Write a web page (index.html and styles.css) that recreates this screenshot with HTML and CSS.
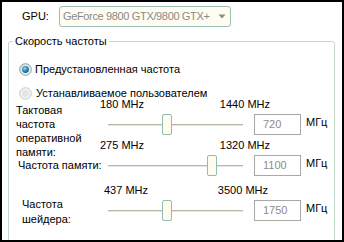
FILE: index.html
```html
<!DOCTYPE html>
<html>
<head>
<meta charset="utf-8">
<link rel="stylesheet" href="styles.css">
</head>
<body>
<div class="window">
  <div class="gpu-row">
    <span class="gpu-label">GPU:</span>
    <div class="select">
      <span class="select-text">GeForce 9800 GTX/9800 GTX+</span>
      <svg class="select-arrow" width="8" height="5" viewBox="0 0 8 5"><path d="M0.5 0.5H7.5L4 4.5Z" fill="#8c8c8c"/></svg>
    </div>
  </div>
  <div class="group">
    <span class="group-title">Скорость частоты</span>
    <div class="radio-row">
      <svg class="radio" width="13" height="13" viewBox="0 0 13 13">
        <defs>
          <radialGradient id="dot" cx="0.4" cy="0.35" r="0.7">
            <stop offset="0" stop-color="#8fdcef"/>
            <stop offset="0.55" stop-color="#2d8bb0"/>
            <stop offset="1" stop-color="#17506b"/>
          </radialGradient>
          <linearGradient id="ring" x1="0" y1="0" x2="1" y2="1">
            <stop offset="0" stop-color="#d8dcdc"/>
            <stop offset="1" stop-color="#f8f8f8"/>
          </linearGradient>
        </defs>
        <circle cx="6.5" cy="6.5" r="5.8" fill="url(#ring)" stroke="#8e9a9c" stroke-width="1"/>
        <circle cx="6.5" cy="6.5" r="3.4" fill="url(#dot)"/>
      </svg>
      <span class="radio-text">Предустановленная частота</span>
    </div>
    <div class="radio-row user">
      <svg class="radio" width="13" height="13" viewBox="0 0 13 13">
        <circle cx="6.5" cy="6.5" r="5.8" fill="#f2f3f1" stroke="#c6cbc9" stroke-width="1"/>
        <circle cx="6.5" cy="6.5" r="3.4" fill="#e2e5e2"/>
      </svg>
      <span class="radio-text clip">Устанавливаемое пользователем</span>
    </div>

    <div class="slider-block">
      <div class="slabel multi first">Тактовая<br>частота<br>оперативной<br>памяти:</div>
      <div class="range"><span>180 MHz</span><span>1440 MHz</span></div>
      <div class="track"><div class="thumb" style="--v:0.4286"></div></div>
      <div class="value">720</div>
      <div class="unit">МГц</div>
    </div>

    <div class="slider-block second">
      <div class="slabel single">Частота памяти:</div>
      <div class="range"><span>275 MHz</span><span>1320 MHz</span></div>
      <div class="track"><div class="thumb" style="--v:0.7895"></div></div>
      <div class="value">1100</div>
      <div class="unit">МГц</div>
    </div>

    <div class="slider-block third">
      <div class="slabel multi shader">Частота<br>шейдера:</div>
      <div class="range shifted"><span>437 MHz</span><span>3500 MHz</span></div>
      <div class="track"><div class="thumb" style="--v:0.4287"></div></div>
      <div class="value">1750</div>
      <div class="unit">МГц</div>
    </div>
  </div>
</div>
</body>
</html>
```

FILE: styles.css
```css
html, body {
  margin: 0;
  padding: 0;
  background: #ffffff;
}

.window {
  width: 344px;
  height: 242px;
  box-sizing: border-box;
  border: 2px solid #000000;
  background: #ffffff;
  overflow: hidden;
  font-family: "Liberation Sans", Arial, sans-serif;
  font-size: 11px;
  line-height: 13px;
  color: #000000;
}

.gpu-row {
  display: flex;
  align-items: center;
  padding: 4px 0 0 20px;
  height: 21px;
}

.gpu-label {
  width: 37px;
}

.select {
  width: 172px;
  height: 21px;
  box-sizing: border-box;
  border: 1px solid #9dbfba;
  border-radius: 3px;
  background: #fffcf1;
  display: flex;
  align-items: center;
  justify-content: space-between;
  padding: 0 4px 0 3px;
}

.select-text {
  color: #8a8a8a;
  white-space: nowrap;
  letter-spacing: -0.35px;
}

.select-arrow {
  display: block;
  flex: none;
}

.group {
  position: relative;
  margin: 14px 7px 0 6px;
  height: 220px;
  border: 1px solid #c3dac8;
  border-radius: 3px;
}

.group-title {
  position: absolute;
  top: -7px;
  left: 4px;
  padding: 0 2px;
  background: #ffffff;
  line-height: 13px;
  white-space: nowrap;
}

.radio-row {
  display: flex;
  align-items: center;
  height: 16px;
  margin: 19px 0 0 10px;
  white-space: nowrap;
}

.radio {
  display: block;
  flex: none;
  margin-right: 3px;
}

.radio-row.user {
  align-items: flex-start;
  height: 12px;
  margin-top: 9px;
}

.radio-row.user .radio {
  margin-top: 1px;
}

.radio-text.clip {
  display: block;
  height: 10px;
  margin-top: 1px;
  overflow: hidden;
  margin-left: 1px;
}

.slider-block {
  display: grid;
  grid-template-columns: 91px 154px 47px auto;
  grid-template-rows: 13px 21px;
  row-gap: 3px;
  white-space: nowrap;
}

.slider-block.second {
  margin-top: 4px;
}

.slider-block.third {
  margin-top: 8px;
}

.slabel {
  grid-column: 1;
}

.slabel.multi {
  grid-row: 1 / span 2;
}

.slabel.first {
  padding: 5px 0 0 7px;
  line-height: 14px;
}

.slabel.shader {
  padding: 13px 0 0 13px;
  line-height: 15px;
}

.slabel.single {
  grid-row: 2;
  padding-left: 9px;
  line-height: 21px;
}

.range {
  grid-column: 2 / span 2;
  grid-row: 1;
  display: flex;
  justify-content: space-between;
  padding-right: 31px;
}

.range.shifted {
  padding-left: 4px;
  padding-right: 33px;
}

.track {
  grid-column: 2;
  grid-row: 2;
  position: relative;
  margin: 0 11px 0 8px;
}

.track::before {
  content: "";
  position: absolute;
  left: 0;
  right: 0;
  top: 10px;
  height: 1px;
  background: #b9b7a8;
  box-shadow: 0 1px 0 #e6e5de;
}

.thumb {
  position: absolute;
  top: 0;
  left: calc((100% - 10px) * var(--v));
  width: 10px;
  height: 21px;
  box-sizing: border-box;
  border: 1px solid #8fbcb6;
  border-radius: 2px;
  background: #fffcee;
}

.value {
  grid-column: 3;
  grid-row: 2;
  box-sizing: border-box;
  border: 1px solid #a8a8a8;
  background: #ffffff;
  color: #8c8c8c;
  padding-left: 8px;
  line-height: 19px;
}

.unit {
  grid-column: 4;
  grid-row: 2;
  margin-left: 5px;
  padding-top: 2px;
}
```
